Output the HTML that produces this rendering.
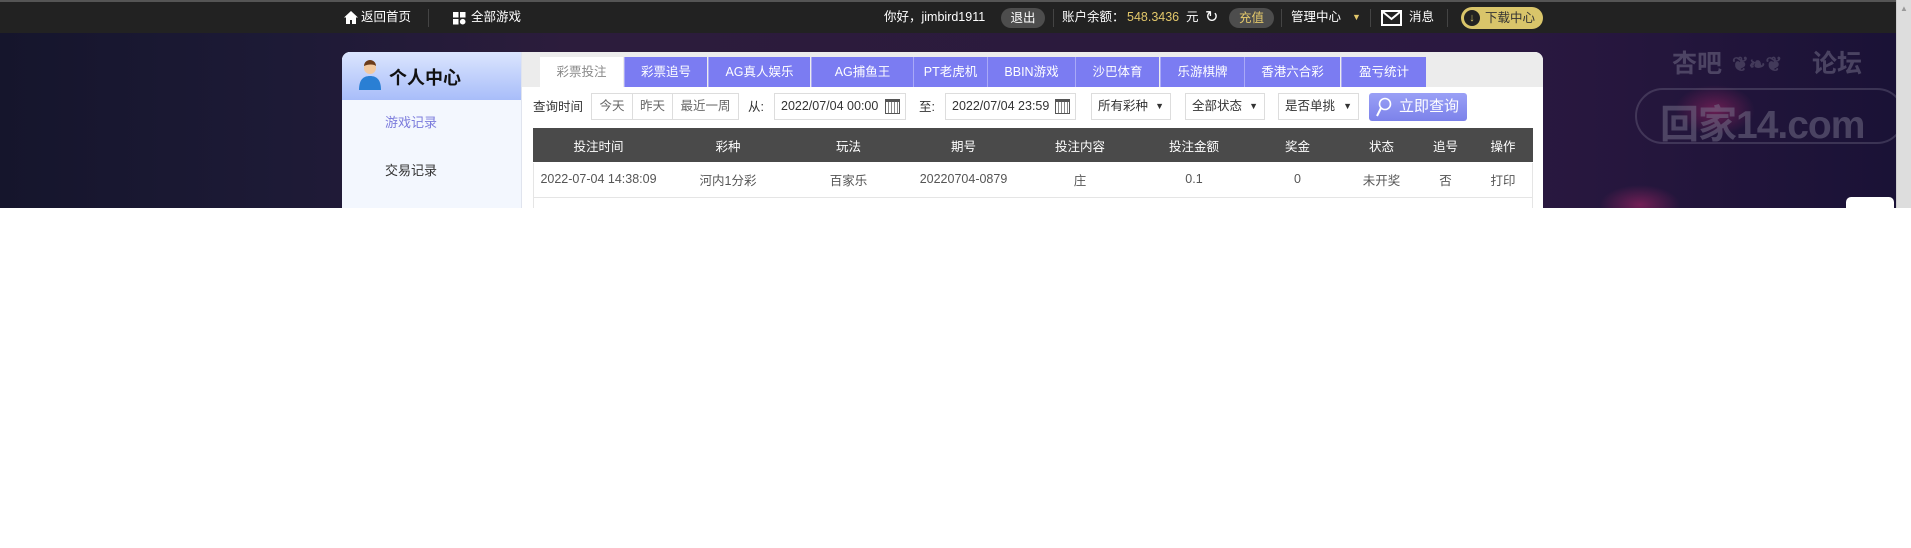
<!DOCTYPE html>
<html><head><meta charset="utf-8"><style>
*{margin:0;padding:0;box-sizing:border-box}
body{width:1911px;height:548px;background:#fff;font-family:"Liberation Sans","Noto Sans CJK SC",sans-serif;font-size:13px;color:#333;position:relative;overflow:hidden}
.bg{position:absolute;left:0;top:0;width:1896px;height:208px;background:
radial-gradient(ellipse 40px 25px at 1715px 110px,rgba(190,40,110,.45),transparent),
radial-gradient(ellipse 40px 20px at 1640px 205px,rgba(190,40,110,.5),transparent),
linear-gradient(90deg,#15152c 0%,#1d1a36 15%,#2c1c3c 30%,#2b1a3d 60%,#2a1840 80%,#1a1236 100%);}
.top{position:absolute;left:0;top:0;width:1896px;height:33px;background:#222;border-top:2px solid #555;color:#fff;font-size:12.5px}
.t{position:absolute;top:0;line-height:31px;white-space:nowrap}
.dv{position:absolute;top:7px;width:1px;height:18px;background:#444}
.btn{position:absolute;top:6px;height:20px;line-height:20px;border-radius:10px;background:#4d4d4d;text-align:center}
.sb{position:absolute;left:1896px;top:0;width:15px;height:208px;background:#ddd;border-left:1px solid #ccc}
.panel{position:absolute;left:342px;top:52px;width:1201px;height:156px;background:#fff;border-radius:8px 8px 0 0;overflow:hidden}
.side{position:absolute;left:0;top:0;width:180px;height:156px;background:#f3f7fe;border-right:1px solid #e0e4ee}
.sh{height:48px;background:linear-gradient(#dbe5fe,#a8bdf9);position:relative}
.tabbar{position:absolute;left:180px;top:0;width:1021px;height:35px;background:#ececec}
.tab{position:absolute;top:5px;height:30px;line-height:30px;text-align:center;color:#fff;background:#7b7cf2;border-left:1px solid #a9a9f7;font-size:12.5px}
.fb{position:absolute;height:27px;border:1px solid #ddd;line-height:25px;font-size:12.5px;background:#fff;padding-left:6px}
table{position:absolute;left:191px;top:76px;width:1000px;border-collapse:collapse;font-size:12.5px}
th{background:#4a4a4a;color:#fff;height:34px;font-weight:normal}
td{height:35px;text-align:center;color:#555;border-bottom:1px solid #e5e5e5}
.wm{position:absolute;color:rgba(120,115,140,.5);font-weight:bold;white-space:nowrap}
</style></head><body>
<div class="bg"></div>
<div class="wm" style="left:1672px;top:44px;font-size:25px">杏吧</div>
<div class="wm" style="left:1812px;top:44px;font-size:25px">论坛</div>
<div class="wm" style="left:1732px;top:52px;font-size:20px;color:rgba(120,115,140,.4)">❦❧❦</div>
<div style="position:absolute;left:1635px;top:88px;width:270px;height:56px;border:2px solid rgba(120,115,140,.35);border-radius:28px"></div>
<div class="wm" style="left:1660px;top:94px;font-size:39px;letter-spacing:-1px">回家14.com</div>
<div style="position:absolute;left:1846px;top:197px;width:48px;height:14px;background:#fff;border-radius:5px 5px 0 0"></div>
<div class="sb"><div style="position:absolute;left:3px;top:4px;font-size:8px;color:#999">▲</div></div>
<div class="top">
<svg style="position:absolute;left:344px;top:9px" width="14" height="13" viewBox="0 0 14 13"><path d="M7 0L0 6.5h2V13h4V9h2v4h4V6.5h2z" fill="#fff"/></svg>
<div class="t" style="left:361px">返回首页</div>
<div class="dv" style="left:428px"></div>
<svg style="position:absolute;left:453px;top:10px" width="13" height="13" viewBox="0 0 13 13" fill="#fff"><rect width="5.5" height="5.5"/><rect x="7" width="5.5" height="5.5"/><rect y="7" width="5.5" height="5.5"/><circle cx="9.7" cy="9.7" r="2.8"/></svg>
<div class="t" style="left:471px">全部游戏</div>
<div class="t" style="left:884px">你好，jimbird1911</div>
<div class="btn" style="left:1001px;width:44px">退出</div>
<div class="dv" style="left:1053px"></div>
<div class="t" style="left:1062px">账户余额：</div>
<div class="t" style="left:1127px;color:#e2c76a">548.3436</div>
<div class="t" style="left:1186px">元</div>
<div class="t" style="left:1205px;font-size:16px">↻</div>
<div class="btn" style="left:1229px;width:45px;color:#e2c76a">充值</div>
<div class="dv" style="left:1281px"></div>
<div class="t" style="left:1291px">管理中心</div>
<div class="t" style="left:1352px;color:#e2c76a;font-size:9px">▼</div>
<div class="dv" style="left:1370px"></div>
<svg style="position:absolute;left:1381px;top:8px" width="21" height="16" viewBox="0 0 21 16"><rect x="1" y="1" width="19" height="14" fill="none" stroke="#fff" stroke-width="2"/><path d="M2 2l8.5 7L19 2" fill="none" stroke="#fff" stroke-width="2"/></svg>
<div class="t" style="left:1409px">消息</div>
<div class="dv" style="left:1447px"></div>
<div style="position:absolute;left:1461px;top:5px;width:82px;height:22px;border-radius:11px;background:#d9c56a;color:#333;font-size:12.5px;line-height:22px;padding-left:24px">下载中心
<div style="position:absolute;left:3px;top:3px;width:16px;height:16px;border-radius:50%;background:#222;color:#d9c56a;font-size:11px;line-height:16px;text-align:center;font-weight:bold">↓</div></div>
</div>
<div class="panel">
<div class="side">
<div class="sh">
<svg style="position:absolute;left:17px;top:8px" width="22" height="30" viewBox="0 0 22 30"><circle cx="11" cy="8" r="6" fill="#f2c9a0"/><path d="M5 6a6 6 0 0 1 12 0c-2-2-8-2-12 0z" fill="#6b3b1a"/><path d="M0 30c0-10 4-14 11-14s11 4 11 14z" fill="#2a7fd4"/></svg>
<div style="position:absolute;left:47px;top:12px;font-size:18px;font-weight:bold;color:#111">个人中心</div></div>
<div style="position:absolute;left:43px;top:62px;line-height:18px;color:#7b7bdc">游戏记录</div>
<div style="position:absolute;left:43px;top:110px;line-height:18px;color:#333">交易记录</div>
</div>
<div class="tabbar">
<div class="tab" style="left:18px;width:83px;background:#fff;color:#888;border:none">彩票投注</div>
<div class="tab" style="left:102px;width:83px">彩票追号</div>
<div class="tab" style="left:186px;width:102px">AG真人娱乐</div>
<div class="tab" style="left:289px;width:102px">AG捕鱼王</div>
<div class="tab" style="left:391px;width:74px">PT老虎机</div>
<div class="tab" style="left:465px;width:88px">BBIN游戏</div>
<div class="tab" style="left:553px;width:84px">沙巴体育</div>
<div class="tab" style="left:638px;width:84px">乐游棋牌</div>
<div class="tab" style="left:722px;width:96px">香港六合彩</div>
<div class="tab" style="left:819px;width:85px">盈亏统计</div>
</div>
<div style="position:absolute;left:191px;top:48px;line-height:14px;font-size:12.5px;color:#333">查询时间</div>
<div class="fb" style="left:249px;top:41px;width:148px;padding:0;color:#666;display:flex"><span style="width:41px;text-align:center;border-right:1px solid #ddd">今天</span><span style="width:40px;text-align:center;border-right:1px solid #ddd">昨天</span><span style="flex:1;text-align:center">最近一周</span></div>
<div style="position:absolute;left:406px;top:48px;font-size:12.5px;line-height:14px">从:</div>
<div class="fb" style="left:432px;top:41px;width:132px">2022/07/04 00:00<span style="position:absolute;right:5px;top:5px;width:15px;height:15px;border:1px solid #555;border-top-width:3px;background:repeating-linear-gradient(90deg,#fff 0 2px,#888 2px 3px)"></span></div>
<div style="position:absolute;left:577px;top:48px;font-size:12.5px;line-height:14px">至:</div>
<div class="fb" style="left:603px;top:41px;width:131px">2022/07/04 23:59<span style="position:absolute;right:5px;top:5px;width:15px;height:15px;border:1px solid #555;border-top-width:3px;background:repeating-linear-gradient(90deg,#fff 0 2px,#888 2px 3px)"></span></div>
<div class="fb" style="left:749px;top:41px;width:80px">所有彩种<span style="position:absolute;right:6px;font-size:9px">▼</span></div>
<div class="fb" style="left:843px;top:41px;width:80px">全部状态<span style="position:absolute;right:6px;font-size:9px">▼</span></div>
<div class="fb" style="left:936px;top:41px;width:81px">是否单挑<span style="position:absolute;right:6px;font-size:9px">▼</span></div>
<div style="position:absolute;left:1027px;top:41px;width:98px;height:28px;border-radius:3px;background:linear-gradient(#9aa0f6,#7c82ea);color:#fff;font-size:15px;line-height:28px;padding-left:30px">立即查询
<svg style="position:absolute;left:7px;top:4px" width="16" height="20" viewBox="0 0 16 20"><circle cx="9" cy="7" r="5.5" fill="none" stroke="#fff" stroke-width="1.6"/><path d="M5 11L1 19" stroke="#fff" stroke-width="2"/></svg></div>
<table>
<tr><th style="width:131px">投注时间</th><th style="width:128px">彩种</th><th style="width:113px">玩法</th><th style="width:117px">期号</th><th style="width:116px">投注内容</th><th style="width:112px">投注金额</th><th style="width:95px">奖金</th><th style="width:73px">状态</th><th style="width:55px">追号</th><th style="width:60px">操作</th></tr>
<tr><td>2022-07-04 14:38:09</td><td>河内1分彩</td><td>百家乐</td><td>20220704-0879</td><td>庄</td><td>0.1</td><td>0</td><td>未开奖</td><td>否</td><td>打印</td></tr>
</table>
<div style="position:absolute;left:191px;top:111px;width:1px;height:50px;background:#e5e5e5"></div>
<div style="position:absolute;left:1190px;top:111px;width:1px;height:50px;background:#e5e5e5"></div>
</div>
</body></html>
